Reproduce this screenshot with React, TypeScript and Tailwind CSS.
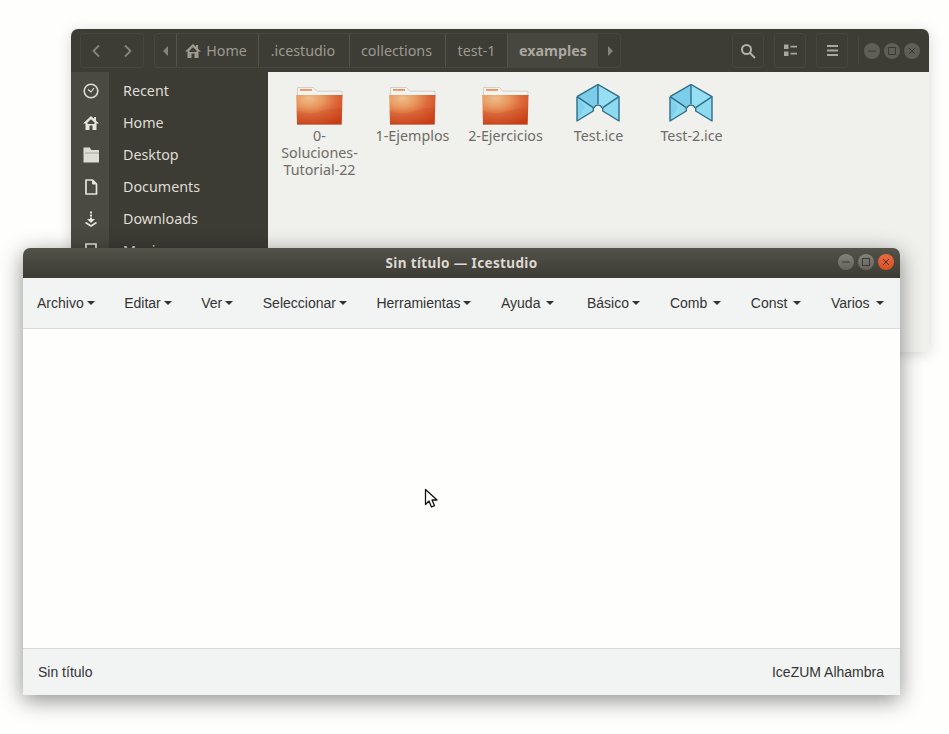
import React from "react";

const ui = "font-['Noto_Sans','Open_Sans',sans-serif]";
const arial = "font-['Liberation_Sans',Arial,sans-serif]";

function Folder({ id }: { id: string }) {
  return (
    <svg width="47" height="38" viewBox="0 0 47 38" className="block mt-[4px]">
      <defs>
        <radialGradient id={id} cx="0.28" cy="0.12" r="1">
          <stop offset="0" stopColor="#efbd8c" />
          <stop offset="0.3" stopColor="#e8995f" />
          <stop offset="0.55" stopColor="#de6c3e" />
          <stop offset="1" stopColor="#cd3f16" />
        </radialGradient>
      </defs>
      <path d="M1.500 9V0.500h16l3.500 3.700h25V9z" fill="#f5f3ef" stroke="#c9c6c0" strokeWidth="0.800" />
      <rect x="4" y="2" width="12" height="1.800" fill="#e8935a" />
      <path d="M0.200 8h46.300l-0.800 29H1z" fill={`url(#${id})`} />
      <path d="M0.600 24Q14 28 24 24.500T46.100 20V37H1z" fill="#a8340c" fillOpacity="0.10" />
      <path d="M1 37.300h44.700" stroke="#a8472a" strokeWidth="0.800" />
    </svg>
  );
}

function IceFile() {
  return (
    <svg width="44" height="39" viewBox="0 0 44 39" className="block mt-[1px]">
      <path d="M22 0.500L1 12.700V37l16.300-10v-3.300L18 24a4.200 4.200 0 0 1 8 0l0.700-0.300V27L43 37V12.700z" fill="#8ddaf1" />
      <path d="M22 0.500L1 12.700l16.300 11 4.700-3.700z" fill="#7ccdea" />
      <path d="M1 12.700V37l8-14z" fill="#80d1ec" />
      <path d="M22 0.500L43 12.700 26.700 23.700 22 20z" fill="#97dff3" />
      <g fill="none" stroke="#2f6d88" strokeWidth="1.400" strokeLinejoin="round">
        <path d="M1 12.700L22 0.500 43 12.700V37L26.700 27V23.700M1 12.700V37L17.300 27V23.700" />
        <path d="M22 0.500V20M1 12.700L17.300 23.700M43 12.700L26.700 23.700" />
        <path d="M18 24a4.200 4.200 0 0 1 8 0" />
      </g>
    </svg>
  );
}

function Caret({ spaced }: { spaced?: boolean }) {
  return (
    <span
      className={`inline-block w-0 h-0 border-x-4 border-t-4 border-x-transparent border-t-[#333333] ${spaced ? "ml-[6px]" : "ml-[3px]"}`}
    />
  );
}

function Clock() {
  return (
    <svg width="16" height="16" viewBox="0 0 16 16" fill="none" stroke="#dedcd5" strokeWidth="1.600">
      <circle cx="8" cy="8" r="6.800" />
      <path d="M5 6.500L8 9l3-4" strokeWidth="1.200" />
    </svg>
  );
}
function HomeIcon({ color, size = 16 }: { color: string; size?: number }) {
  return (
    <svg width={size} height={size} viewBox="0 0 16 16">
      <path
        fillRule="evenodd"
        d="M8 1L0 8.500h2.500V15h4v-4.500h3V15h4V8.500H16L13 5.700V2h-2v1.800zM8 4.200L4.500 7.500V9h7V7.500z"
        fill={color}
      />
    </svg>
  );
}
function DesktopIcon() {
  return (
    <svg width="16" height="16" viewBox="0 0 16 16">
      <path d="M0.500 0.500h6.500l1 2.500H0.500z" fill="#dedcd5" />
      <path d="M0.500 3h15.500v12.500H0.500z" fill="#dedcd5" />
      <path d="M2 5.500h14v8.500H2z" fill="#a9a7a0" />
      <path d="M2 6.500h14v8H2z" fill="#dedcd5" />
    </svg>
  );
}
function DocIcon() {
  return (
    <svg width="14" height="16" viewBox="0 0 14 16" fill="none" stroke="#e6e4dd" strokeWidth="1.700">
      <path d="M2 1h6.500L12.500 5v10H2z" strokeLinejoin="round" />
      <path d="M8.500 1v4h4" fill="#e6e4dd" strokeWidth="1" />
    </svg>
  );
}
function DownIcon() {
  return (
    <svg width="14" height="16" viewBox="0 0 14 16">
      <path d="M6 0.500h2v2H6zM6 3.500h2v2H6zM6 6.500h2v1.500h3L7 12 3 8h3z" fill="#e6e4dd" />
      <path d="M1.500 11.500L7 15l5.500-3.500" fill="none" stroke="#e6e4dd" strokeWidth="1.500" />
    </svg>
  );
}
function MusicIcon() {
  return (
    <svg width="14" height="16" viewBox="0 0 14 16" fill="none" stroke="#e6e4dd" strokeWidth="1.700">
      <path d="M2 1h10v14H2z" />
    </svg>
  );
}

const crumbBase = `flex items-center justify-center h-full border-r border-[#55544c] text-[14.300px] text-[#9c9a91]`;

const sidebar: [React.ReactNode, string][] = [
  [<Clock />, "Recent"],
  [<HomeIcon color="#e6e4dd" />, "Home"],
  [<DesktopIcon />, "Desktop"],
  [<DocIcon />, "Documents"],
  [<DownIcon />, "Downloads"],
  [<MusicIcon />, "Music"],
];

const files: [React.ReactNode, React.ReactNode][] = [
  [<Folder id="f1" />, <>0-<br />Soluciones-<br />Tutorial-22</>],
  [<Folder id="f2" />, "1-Ejemplos"],
  [<Folder id="f3" />, "2-Ejercicios"],
  [<IceFile />, "Test.ice"],
  [<IceFile />, "Test-2.ice"],
];

const menus: [string, boolean?, string?][] = [
  ["Archivo"],
  ["Editar"],
  ["Ver"],
  ["Seleccionar"],
  ["Herramientas"],
  ["Ayuda", true],
  ["Básico", false, "ml-[3px]"],
  ["Comb", true, "ml-[0.500px]"],
  ["Const", true],
  ["Varios", true],
];

function HeaderBtn({ children, className = "" }: { children: React.ReactNode; className?: string }) {
  return (
    <div className={`w-[32px] h-[35px] rounded-[4px] border border-[#47463f] flex items-center justify-center ${className}`}>
      {children}
    </div>
  );
}

export default function App() {
  return (
    <div className={`relative w-[949px] h-[734px] overflow-hidden bg-[#fefefc] ${ui}`}>
      {/* File manager window */}
      <div className="absolute left-[71px] top-[29px] w-[858px] h-[323px] flex flex-col rounded-t-[7px] overflow-hidden shadow-[0_2px_14px_rgba(0,0,0,0.16)] bg-[#f0f0ed]">
        <div className="h-[43px] shrink-0 bg-[#3d3c35] flex items-center pl-[9px]">
          <div className="flex w-[64px] h-[35px] rounded-[4px] border border-[#47463f]">
            <div className="w-1/2 flex items-center justify-center pr-[1px]">
              <svg width="10" height="14" viewBox="0 0 10 14" fill="none" stroke="#85847b" strokeWidth="1.800"><path d="M8 1.500L2.500 7 8 12.500" /></svg>
            </div>
            <div className="w-1/2 flex items-center justify-center">
              <svg width="10" height="14" viewBox="0 0 10 14" fill="none" stroke="#85847b" strokeWidth="1.800"><path d="M2 1.500L7.500 7 2 12.500" /></svg>
            </div>
          </div>
          <div className="ml-[10px] flex h-[35px] w-[467px] rounded-[4px] border border-[#47463f] overflow-hidden">
            <div className="w-[22px] flex items-center justify-center border-r border-[#55544c]">
              <span className="w-0 h-0 border-y-[5px] border-r-[5px] border-y-transparent border-r-[#85847b]" />
            </div>
            <div className={`${crumbBase} w-[82px] gap-[5px] pr-[3px]`}>
              <HomeIcon color="#9c9a91" />
              <span>Home</span>
            </div>
            <div className={`${crumbBase} w-[91px] pr-[2px]`}>.icestudio</div>
            <div className={`${crumbBase} w-[96px] pr-[2px]`}>collections</div>
            <div className={`${crumbBase} w-[62px]`}>test-1</div>
            <div className="w-[90px] flex items-center justify-center h-full bg-[#47463f] text-[14.300px] font-bold text-[#aaa89f]">examples</div>
            <div className="flex-1 flex items-center justify-center pl-[3px]">
              <span className="w-0 h-0 border-y-[5px] border-l-[5px] border-y-transparent border-l-[#85847b]" />
            </div>
          </div>
          <HeaderBtn className="ml-[111px]">
            <svg width="16" height="16" viewBox="0 0 16 16" fill="none" stroke="#b3b1a8" strokeWidth="2"><circle cx="6.500" cy="6.500" r="4.500" /><path d="M10 10l5 5" /></svg>
          </HeaderBtn>
          <HeaderBtn className="ml-[10px]">
            <svg width="13" height="13" viewBox="0 0 13 13" fill="#a8a69d"><path d="M0 0.500h4.500v4.500H0zM0 7.500h4.500v4.500H0zM6.500 1.700h6.500v1.800H6.500zM6.500 8.700h6.500v1.800H6.500z" /></svg>
          </HeaderBtn>
          <HeaderBtn className="ml-[10px]">
            <svg width="11" height="11" viewBox="0 0 11 11" fill="#a8a69d"><path d="M0 0h11v2H0zM0 4.500h11v2H0zM0 9h11v2H0z" /></svg>
          </HeaderBtn>
          <div className="ml-[10px] w-px h-[29px] bg-[#47463f]" />
          <div className="ml-[5px] flex gap-[4px]">
            {["M4 8h8", "M4.500 4.500h7v7h-7z", "M5 5l6 6M11 5l-6 6"].map((d) => (
              <div key={d} className="w-[16px] h-[16px] rounded-full bg-[#5f5e56]">
                <svg width="16" height="16" viewBox="0 0 16 16" fill="none" stroke="#3a3933" strokeWidth="1"><path d={d} /></svg>
              </div>
            ))}
          </div>
        </div>
        <div className="flex-1 flex min-h-0">
          <div className="w-[197px] shrink-0 bg-[#3c3b34] relative">
            <div className="absolute left-0 top-0 bottom-0 w-[38px] bg-[#4a4942]" />
            <div className="relative flex flex-col pt-[3px]">
              {sidebar.map(([icon, label]) => (
                <div key={label} className="h-[32px] flex items-center">
                  <div className="w-[40px] flex items-center justify-center">{icon}</div>
                  <span className="ml-[12px] text-[14.300px] text-[#dfddd6]">{label}</span>
                </div>
              ))}
            </div>
          </div>
          <div className="flex-1 flex items-start pl-[5px] pt-[11px] bg-[#f0f0ed]">
            {files.map(([icon, label], i) => (
              <div key={i} className="w-[93px] flex flex-col items-center">
                <div className="h-[44px] flex items-start justify-center pr-[1px]">{icon}</div>
                <div className="text-center text-[14.300px] leading-[17px] text-[#6e6c66] whitespace-nowrap">
                  {label}
                </div>
              </div>
            ))}
          </div>
        </div>
      </div>

      {/* Icestudio window */}
      <div className="absolute left-[23px] top-[248px] w-[877px] h-[447px] flex flex-col bg-[#fefefc] rounded-t-[7px] overflow-hidden shadow-[0_5px_22px_rgba(0,0,0,0.45)]">
        <div className="relative h-[30px] shrink-0 bg-gradient-to-b from-[#54534a] to-[#3c3b34] flex items-center justify-center">
          <span className="text-[13.500px] font-bold tracking-[0.37px] text-[#dcd9d0]">Sin título — Icestudio</span>
          <div className="absolute right-[6px] top-[6px] flex gap-[4px]">
            <div className="w-[16px] h-[16px] rounded-full bg-gradient-to-b from-[#84837b] to-[#65645c]">
              <svg width="16" height="16" viewBox="0 0 16 16" fill="none" stroke="#3a3933" strokeWidth="1"><path d="M4 8h8" /></svg>
            </div>
            <div className="w-[16px] h-[16px] rounded-full bg-gradient-to-b from-[#84837b] to-[#65645c]">
              <svg width="16" height="16" viewBox="0 0 16 16" fill="none" stroke="#3a3933" strokeWidth="1"><path d="M4.500 4.500h7v7h-7z" /></svg>
            </div>
            <div className="w-[16px] h-[16px] rounded-full bg-gradient-to-b from-[#ea6a3e] to-[#d94f22]">
              <svg width="16" height="16" viewBox="0 0 16 16" fill="none" stroke="#3a3933" strokeWidth="1"><path d="M5 5l6 6M11 5l-6 6" /></svg>
            </div>
          </div>
        </div>
        <div className={`h-[51px] shrink-0 bg-[#f2f4f4] border-b border-[#d9dbdb] flex items-center pl-[14px] gap-[29.500px] text-[14px] text-[#333333] ${arial}`}>
          {menus.map(([label, spaced, cls]) => (
            <div key={label} className={`flex items-center whitespace-nowrap ${cls ?? ""}`}>
              <span>{label}</span>
              <Caret spaced={spaced} />
            </div>
          ))}
        </div>
        <div className="flex-1 relative bg-[#fefefc]">
          <svg width="15" height="21" viewBox="0 0 15 21" className="absolute left-[401px] top-[159px]">
            <path d="M1.500 1.500V16.500L5 13l2.500 6 3-1.300L8 12h5z" fill="#fff" stroke="#111" strokeWidth="1.300" strokeLinejoin="round" />
          </svg>
        </div>
        <div className={`h-[47px] shrink-0 bg-[#f2f4f4] border-t border-[#d9dbdb] flex items-center justify-between pl-[15px] pr-[16px] text-[14px] text-[#333333] ${arial}`}>
          <span>Sin título</span>
          <span>IceZUM Alhambra</span>
        </div>
      </div>
    </div>
  );
}
